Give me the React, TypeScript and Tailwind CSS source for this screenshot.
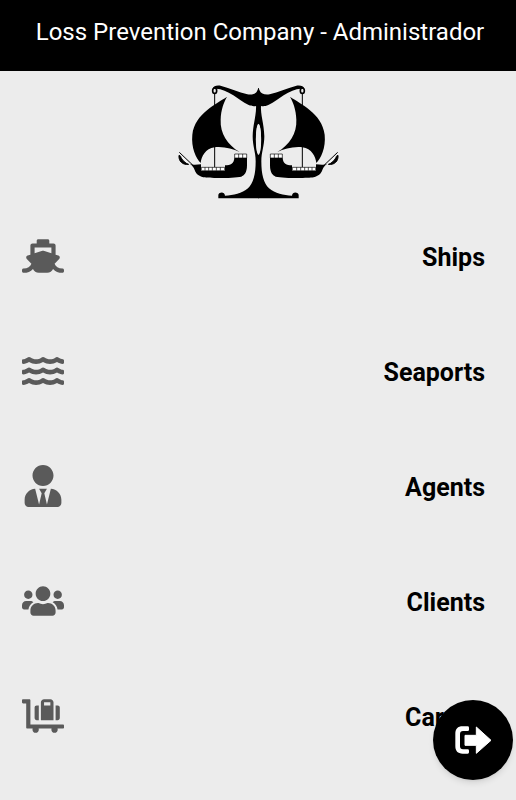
import type { IconType } from 'react-icons';
import { FaLuggageCart, FaShip, FaUsers, FaUserTie, FaWater } from 'react-icons/fa';

interface MenuItem {
  label: string;
  href: string;
  icon: IconType;
}

const menuItems: MenuItem[] = [
  { label: 'Ships', href: '#ships', icon: FaShip },
  { label: 'Seaports', href: '#seaports', icon: FaWater },
  { label: 'Agents', href: '#agents', icon: FaUserTie },
  { label: 'Clients', href: '#clients', icon: FaUsers },
  { label: 'Cargos', href: '#cargos', icon: FaLuggageCart },
];

// Left half of the scale, with its hanging ship
function ScaleHalf() {
  return (
    <>
      <ellipse cx="134" cy="38" rx="6" ry="8" fill="none" stroke="#000" strokeWidth="5" />
      <path d="M128 32C130 23 143 21 154 24C180 30 206 44 232 49C248 51 258 47 261 40L265 31H267V84H258C252 85 244 85 236 81C218 74 205 61 190 52C172 41 155 32 138 32Z" />
      <path d="M258 80C260 112 249 135 248 175C248 205 257 222 257 250C257 290 250 316 234 331C216 346 190 352 165 353C164 340 148 341 145 350V361H267V232C261 224 258 210 258 184C258 158 261 143 267 136V80Z" />
      <path d="M134 46V268" stroke="#000" strokeWidth="3" />
      <path d="M171 56C140 78 75 105 67 170C63 210 78 240 92 255C94 236 106 212 134 208C162 205 188 213 209 222C172 200 150 165 152 125C153 95 161 74 171 56Z" />
      <path d="M60 258C75 262 82 259 93 259V279H165V262C182 262 192 256 193 240H231V262C231 285 222 293 214 296C190 301 120 301 100 298C85 294 77 286 74 276C71 268 66 262 60 258Z" />
      <path d="M94 268H164V278H94ZM105 268V278M116 268V278M127 268V278M139 268V278M151 268V278" fill="#fff" stroke="#000" strokeWidth="2" />
      <path d="M194 228H230V240H194ZM206 228V240M218 228V240" fill="#fff" stroke="#000" strokeWidth="2" />
      <path d="M28 223L68 261" stroke="#000" strokeWidth="3" />
      <path d="M27 232C25 249 38 262 56 259C46 256 35 246 32 235Z" stroke="#000" strokeWidth="3" />
      <path d="M34 236L54 256" stroke="#fff" strokeWidth="3" />
    </>
  );
}

function Logo() {
  return (
    <svg viewBox="24 18 483 348" className="h-[116px] w-[161px]" role="img" aria-label="Loss Prevention Company">
      <ScaleHalf />
      <g transform="translate(531 0) scale(-1 1)">
        <ScaleHalf />
      </g>
      {/* opening in the post */}
      <ellipse cx="265.5" cy="184" rx="8" ry="46" fill="#ececec" />
    </svg>
  );
}

function ExitIcon() {
  return (
    <svg viewBox="194 109 111 84" className="h-7 w-[37px]" fill="currentColor" aria-hidden="true">
      <path d="M232 110H217C202 110 195 118 195 132V170C195 184 202 192 217 192H232Q236 192 236 188V183Q236 179 232 179H218Q209 179 209 170V133Q209 124 218 124H232Q236 124 236 120V114Q236 110 232 110Z" />
      <path d="M258 112L302 152L258 191V167H224V137H258Z" stroke="currentColor" strokeWidth="3" strokeLinejoin="round" />
    </svg>
  );
}

export default function App() {
  return (
    <div className="min-h-screen bg-[#ececec] font-['Roboto',sans-serif] text-black">
      <header className="flex h-[71px] items-center justify-center bg-black pb-2 pl-1">
        <h1 className="whitespace-nowrap text-2xl text-white">Loss Prevention Company - Administrador</h1>
      </header>

      <main>
        <div className="flex justify-center pt-[13px]">
          <Logo />
        </div>

        <nav>
          <ul>
            {menuItems.map(({ label, href, icon: Icon }) => (
              <li key={label}>
                <a href={href} className="flex h-[115px] items-center justify-between pl-[22px] pr-[31px]">
                  <Icon size={42} className="mb-[3px] text-[#5a5a5a]" aria-hidden="true" />
                  <span className="text-[25px] font-bold">{label}</span>
                </a>
              </li>
            ))}
          </ul>
        </nav>
      </main>

      <button
        type="button"
        aria-label="Sign out"
        className="fixed bottom-5 right-[3px] flex size-20 items-center justify-center rounded-full bg-black text-white shadow-md"
      >
        <ExitIcon />
      </button>
    </div>
  );
}
